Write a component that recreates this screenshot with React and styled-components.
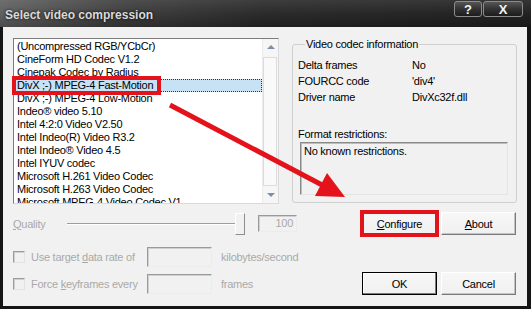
import React from "react";
import styled, { createGlobalStyle } from "styled-components";

const GlobalStyle = createGlobalStyle`
  html, body {
    margin: 0;
    padding: 0;
    background: #111;
  }
  body {
    font-family: "Liberation Sans", Arial, sans-serif;
  }
`;

const Window = styled.div`
  position: relative;
  width: 531px;
  height: 309px;
  display: flex;
  flex-direction: column;
  background: #151515;
  overflow: hidden;
`;

const TitleBar = styled.div`
  height: 27px;
  flex-shrink: 0;
  display: flex;
  justify-content: space-between;
  align-items: flex-start;
  padding: 0 8px 0 5px;
  background:
    linear-gradient(180deg, rgba(255, 255, 255, 0.1) 0%, rgba(255, 255, 255, 0.02) 50%, rgba(0, 0, 0, 0.2) 100%),
    linear-gradient(90deg, #5e5e5e 0%, #3c3c3c 22%, #272727 50%, #1e1e1e 100%);
`;

const Title = styled.div`
  margin-top: 8px;
  font: bold 12px "Liberation Sans", Arial, sans-serif;
  color: #d9d9d9;
  text-shadow: 0 0 3px rgba(0, 0, 0, 0.9);
`;

const Caption = styled.div`
  display: flex;
  gap: 1px;
  margin-top: 1px;
`;

const CapButton = styled.div`
  width: ${(p) => p.$w}px;
  height: 16px;
  box-sizing: border-box;
  border: 1px solid #8c8c8c;
  border-radius: 3px;
  background: linear-gradient(180deg, #555 0%, #333 50%, #1c1c1c 100%);
  color: #f2f2f2;
  font: bold 13px "Liberation Sans", Arial, sans-serif;
  display: flex;
  align-items: center;
  justify-content: center;
`;

const Client = styled.div`
  flex: 1;
  margin: 0 4px 3px 3px;
  padding: 11px 10px 0 10px;
  background: #f1f1f1;
  display: flex;
  flex-direction: column;
  font-size: 11px;
  letter-spacing: -0.25px;
  color: #000;
`;

const TopRow = styled.div`
  display: flex;
  height: 166px;
`;

const ListFrame = styled.div`
  position: relative;
  width: 266px;
  flex: none;
`;

const ListBox = styled.div`
  height: 100%;
  box-sizing: border-box;
  display: flex;
  background: #fff;
  border: 1px solid;
  border-color: #7d7d7d #dadada #dadada #7d7d7d;
`;

const Items = styled.div`
  flex: 1;
  overflow: hidden;
  padding-top: 1px;
`;

const Item = styled.div`
  height: 13px;
  line-height: 13px;
  padding-left: 3px;
  white-space: nowrap;
  box-sizing: border-box;
  background: ${(p) => (p.$selected ? "#c7e1f5" : "transparent")};
  outline: ${(p) => (p.$selected ? "1px dotted #333" : "none")};
  outline-offset: -1px;
`;

const ScrollBar = styled.div`
  width: 15px;
  display: flex;
  flex-direction: column;
  background: #f6f6f6;
  border-left: 1px solid #ececec;
`;

const ScrollArrow = styled.div`
  height: 17px;
  display: flex;
  align-items: center;
  justify-content: center;
  &::after {
    content: "";
    border-left: 4px solid transparent;
    border-right: 4px solid transparent;
    ${(p) => (p.$down ? "border-top" : "border-bottom")}: 4px solid #7d8ea8;
  }
`;

const ScrollThumb = styled.div`
  height: 128px;
  margin: 1px 1px 0 0;
  border: 1px solid #dcdcdc;
  background: #f9f9f9;
`;

const ScrollTrack = styled.div`
  flex: 1;
`;

const Annotation = styled.div`
  position: absolute;
  left: ${(p) => p.$x}px;
  top: ${(p) => p.$y}px;
  width: ${(p) => p.$w}px;
  height: ${(p) => p.$h}px;
  box-sizing: border-box;
  border: 4px solid #e3121b;
  pointer-events: none;
`;

const Group = styled.fieldset`
  margin: 0 0 0 13px;
  width: 225px;
  height: 165px;
  box-sizing: border-box;
  padding: 6px 8px 0 5px;
  border: 1px solid #cfcfcf;
  border-radius: 3px;
  min-width: 0;
`;

const Legend = styled.legend`
  padding: 0 1px;
  margin-left: 7px;
  line-height: 13px;
`;

const InfoRow = styled.div`
  display: flex;
  height: 16px;
  align-items: center;
`;

const InfoLabel = styled.span`
  width: 114px;
  flex: none;
`;

const SubLabel = styled.div`
  margin-top: 23px;
  line-height: 13px;
`;

const Restrictions = styled.div`
  margin: 1px 0 0 2px;
  height: 53px;
  box-sizing: border-box;
  padding: 2px 3px;
  line-height: 13px;
  border: 1px solid;
  border-color: #8a8a8a #e4e4e4 #e4e4e4 #8a8a8a;
  box-shadow: inset 1px 1px 0 #bdbdbd;
`;

const Row = styled.div`
  display: flex;
  align-items: center;
  height: ${(p) => p.$h}px;
  margin-top: ${(p) => p.$mt}px;
`;

const Dim = styled.span`
  color: #a9a9a9;
  width: ${(p) => (p.$w ? `${p.$w}px` : "auto")};
  margin-left: ${(p) => p.$ml || 0}px;
  flex: none;
  white-space: nowrap;
`;

const Slider = styled.div`
  width: 180px;
  height: 23px;
  display: flex;
  align-items: center;
  flex: none;
`;

const Groove = styled.div`
  width: 168px;
  height: 2px;
  border-top: 1px solid #9d9d9d;
  border-bottom: 1px solid #fff;
  box-sizing: border-box;
`;

const Thumb = styled.div`
  width: 10px;
  height: 22px;
  box-sizing: border-box;
  background: #f1f1f1;
  border: 1px solid;
  border-color: #fff #8d8d8d #8d8d8d #fff;
`;

const Edit = styled.div`
  width: ${(p) => p.$w}px;
  height: ${(p) => p.$h}px;
  margin-left: ${(p) => p.$ml || 0}px;
  box-sizing: border-box;
  flex: none;
  border: 1px solid;
  border-color: #9a9a9a #ececec #ececec #9a9a9a;
  box-shadow: inset 1px 1px 0 #d0d0d0;
  color: #a9a9a9;
  text-align: right;
  padding-right: 3px;
  line-height: 15px;
`;

const Check = styled.div`
  width: 12px;
  height: 12px;
  box-sizing: border-box;
  flex: none;
  margin-right: 6px;
  border: 1px solid;
  border-color: #9c9c9c #e2e2e2 #e2e2e2 #9c9c9c;
  box-shadow: inset 1px 1px 0 #cfcfcf;
`;

const ButtonPair = styled.div`
  margin-left: auto;
  margin-right: 1px;
  display: flex;
  gap: 4px;
`;

const Button = styled.div`
  width: 75px;
  height: 23px;
  box-sizing: border-box;
  display: flex;
  align-items: center;
  justify-content: center;
  background: linear-gradient(180deg, #f7f7f7 0%, #f0f0f0 100%);
  border: 1px solid;
  border-color: ${(p) => (p.$default ? "#000" : "#fff #7a7a7a #7a7a7a #fff")};
  box-shadow: ${(p) =>
    p.$default ? "inset -1px -1px 0 #7a7a7a, inset 1px 1px 0 #fff" : "inset -1px -1px 0 #c4c4c4"};
  outline: ${(p) => (p.$marked ? "4px solid #e3121b" : "none")};
  outline-offset: -2px;
  font-size: 11px;
  color: #000;
`;

const Arrow = styled.svg`
  position: absolute;
  left: 0;
  top: 0;
  pointer-events: none;
`;

const codecs = [
  "(Uncompressed RGB/YCbCr)",
  "CineForm HD Codec V1.2",
  "Cinepak Codec by Radius",
  "DivX ;-) MPEG-4 Fast-Motion",
  "DivX ;-) MPEG-4 Low-Motion",
  "Indeo® video 5.10",
  "Intel 4:2:0 Video V2.50",
  "Intel Indeo(R) Video R3.2",
  "Intel Indeo® Video 4.5",
  "Intel IYUV codec",
  "Microsoft H.261 Video Codec",
  "Microsoft H.263 Video Codec",
  "Microsoft MPEG-4 Video Codec V1",
];

const info = [
  ["Delta frames", "No"],
  ["FOURCC code", "'div4'"],
  ["Driver name", "DivXc32f.dll"],
];

export default function App() {
  return (
    <>
      <GlobalStyle />
      <Window>
        <TitleBar>
          <Title>Select video compression</Title>
          <Caption>
            <CapButton $w={28}>?</CapButton>
            <CapButton $w={40}>X</CapButton>
          </Caption>
        </TitleBar>
        <Client>
          <TopRow>
            <ListFrame>
              <ListBox>
                <Items>
                  {codecs.map((c, i) => (
                    <Item key={c} $selected={i === 3}>
                      {c}
                    </Item>
                  ))}
                </Items>
                <ScrollBar>
                  <ScrollArrow />
                  <ScrollThumb />
                  <ScrollTrack />
                  <ScrollArrow $down />
                </ScrollBar>
              </ListBox>
              <Annotation $x={-1} $y={38} $w={149} $h={19} />
            </ListFrame>
            <Group>
              <Legend>Video codec information</Legend>
              {info.map(([k, v]) => (
                <InfoRow key={k}>
                  <InfoLabel>{k}</InfoLabel>
                  <span>{v}</span>
                </InfoRow>
              ))}
              <SubLabel>Format restrictions:</SubLabel>
              <Restrictions>No known restrictions.</Restrictions>
            </Group>
          </TopRow>

          <Row $h={23} $mt={8}>
            <Dim $w={54}>
              <u>Q</u>uality
            </Dim>
            <Slider>
              <Groove />
              <Thumb />
            </Slider>
            <Edit $w={39} $h={17} $ml={11}>
              100
            </Edit>
            <ButtonPair>
              <Button $marked>
                <span>
                  <u>C</u>onfigure
                </span>
              </Button>
              <Button>
                <span>
                  <u>A</u>bout
                </span>
              </Button>
            </ButtonPair>
          </Row>

          <Row $h={21} $mt={11}>
            <Check />
            <Dim $w={116}>
              Use target <u>d</u>ata rate of
            </Dim>
            <Edit $w={65} $h={20} />
            <Dim $ml={9}>kilobytes/second</Dim>
          </Row>

          <Row $h={23} $mt={5}>
            <Check />
            <Dim $w={116}>
              Force <u>k</u>eyframes every
            </Dim>
            <Edit $w={65} $h={20} />
            <Dim $ml={9}>frames</Dim>
            <ButtonPair>
              <Button $default>OK</Button>
              <Button>Cancel</Button>
            </ButtonPair>
          </Row>
        </Client>

        <Arrow width="531" height="309" viewBox="0 0 531 309">
          <line x1="170" y1="105" x2="324" y2="186" stroke="#e3121b" strokeWidth="5" />
          <polygon points="345,197 315,196 327,173" fill="#e3121b" />
        </Arrow>
      </Window>
    </>
  );
}
